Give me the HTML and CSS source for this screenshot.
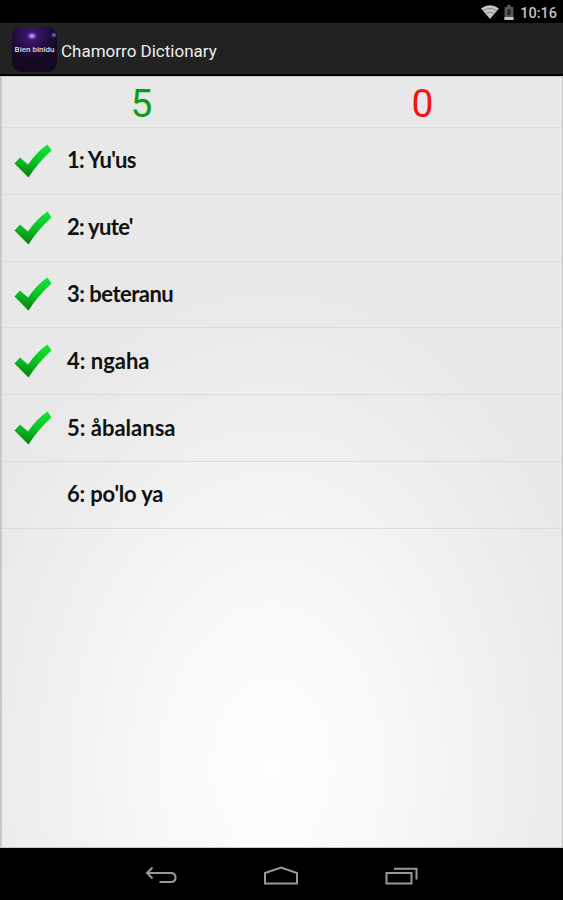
FILE: index.html
```
<!DOCTYPE html>
<html lang="en">
<head>
    <meta charset="UTF-8">
    <meta name="viewport" content="width=device-width, initial-scale=1.0">
    <title>Chamorro Dictionary</title>
    <link rel="stylesheet" href="styles.css">
</head>
<body>
    <!-- shared check mark -->
    <svg class="defs" width="0" height="0">
        <defs>
            <linearGradient id="green" x1="0.6" y1="0" x2="0.4" y2="1">
                <stop offset="0" stop-color="#10e432"/>
                <stop offset="0.5" stop-color="#0bc326"/>
                <stop offset="1" stop-color="#078010"/>
            </linearGradient>
            <symbol id="check" viewBox="0 0 38 34">
                <path d="M0.500 19.500L6 13.500L14 20.500C20 12 26 5.500 33.500 0.500L37.500 6.500C29 14 21 23 14.500 33.500Z" fill="url(#green)"/>
            </symbol>
        </defs>
    </svg>

    <div class="status-bar">
        <svg class="wifi" width="18" height="14" viewBox="0 0 18 14">
            <path d="M0 3.500Q9 -3 18 3.500L9 14Z" fill="#c4c4c4"/>
            <path d="M2 6Q9 1 16 6M4.500 9Q9 5.500 13.500 9" fill="none" stroke="#777" stroke-width="0.8"/>
        </svg>
        <svg class="battery" width="10" height="15" viewBox="0 0 10 15">
            <path d="M3 0H7V2H9.500V15H0.500V2H3Z" fill="#555"/>
            <path d="M3.500 4.500H6.500V10H3.500Z" fill="#222"/>
            <path d="M0.500 12H9.500V15H0.500Z" fill="#c8c8c8"/>
        </svg>
        <span class="clock">10:16</span>
    </div>

    <div class="action-bar">
        <div class="app-icon"><span>Bien binidu</span></div>
        <h1>Chamorro Dictionary</h1>
    </div>

    <div class="content">
        <div class="score">
            <span class="right">5</span>
            <span class="wrong">0</span>
        </div>
        <ul class="words">
            <li><svg class="check"><use href="#check"/></svg><span class="tight">1: Yu'us</span></li>
            <li><svg class="check"><use href="#check"/></svg><span class="tight">2: yute'</span></li>
            <li><svg class="check"><use href="#check"/></svg><span class="snug">3: beteranu</span></li>
            <li><svg class="check"><use href="#check"/></svg><span>4: ngaha</span></li>
            <li><svg class="check"><use href="#check"/></svg><span>5: åbalansa</span></li>
            <li><svg class="check"></svg><span class="close">6: po'lo ya</span></li>
        </ul>
    </div>

    <div class="nav-bar">
        <svg width="32" height="20" viewBox="0 0 32 20">
            <path d="M7.500 1.500L2 7L7.500 12.500M2 7H26Q30.500 7 30.500 11.500Q30.500 16 26 16H14.500"/>
        </svg>
        <svg width="36" height="20" viewBox="0 0 36 20">
            <path d="M2 17.500V7L18 1.500L34 7V17.500Z"/>
        </svg>
        <svg width="33" height="20" viewBox="0 0 33 20">
            <path d="M1.500 7H26.500V17.500H1.500ZM9 2.800H31.500V13.500"/>
        </svg>
    </div>
</body>
</html>
```
FILE: styles.css
```
* {
    box-sizing: border-box;
}
body {
    display: flex;
    flex-direction: column;
    height: 900px;
    margin: 0;
    background-color: #000;
    font-family: Roboto, sans-serif;
    overflow: hidden;
}
.defs {
    position: absolute;
}
.status-bar {
    display: flex;
    justify-content: flex-end;
    height: 23px;
    padding: 5px 6px 0 0;
}
.battery {
    margin: 0 6px 0 5px;
}
.clock {
    color: #c0c0c0;
    font-size: 14.5px;
    font-weight: 500;
    line-height: 17px;
}
.action-bar {
    display: flex;
    align-items: center;
    height: 53px;
    padding: 2px 0 0 12px;
    background-color: #222;
    border-bottom: 2px solid #000;
}
.app-icon {
    display: flex;
    justify-content: center;
    width: 45px;
    height: 45px;
    padding-top: 16px;
    border-radius: 9px;
    background:
        radial-gradient(ellipse 5px 4px at 20px 9px, #d9c4ff, #8247d8 55%, transparent),
        radial-gradient(circle 3px at 42px 8px, #8c7ae0, transparent),
        radial-gradient(circle at 20px 9px, #451c78 0, #220c43 16px, transparent 25px),
        #130a20;
}
.app-icon span {
    color: #ddd;
    font-size: 8px;
    font-weight: 500;
    line-height: 14px;
    white-space: nowrap;
}
h1 {
    margin: 2px 0 0 4px;
    color: #eee;
    font-size: 17px;
    font-weight: 400;
}
.content {
    flex: 1;
    border: 1px solid #c8c8c8;
    border-width: 1px 1px 1px 2px;
    background: radial-gradient(ellipse 330px 480px at 270px 690px, #fdfdfd 0, #f8f8f8 35%, #eee 75%, #e8e8e8 100%);
}
.score {
    display: flex;
    height: 51px;
    border-bottom: 1px solid #dbdbdb;
    font-size: 39px;
    line-height: 54px;
    text-align: center;
}
.score span {
    flex: 1;
}
.score .right {
    padding-right: 2px;
    color: #0a9e12;
}
.wrong {
    color: #f51414;
}
.words {
    margin: 0;
    padding: 0;
    list-style: none;
}
.words li {
    display: flex;
    align-items: center;
    height: 66.8px;
    padding-left: 12px;
    border-bottom: 1px solid #dbdbdb;
    color: #111;
    font-family: Lato, sans-serif;
    font-size: 22px;
    font-weight: 700;
    line-height: 30px;
}
.words span {
    padding-bottom: 1px;
}
.words .tight {
    letter-spacing: -0.7px;
}
.words .snug {
    letter-spacing: -0.5px;
}
.words .close {
    letter-spacing: -0.2px;
}
.check {
    width: 38px;
    height: 34px;
    margin-right: 15px;
}
.nav-bar {
    display: flex;
    justify-content: center;
    align-items: center;
    gap: 86px;
    height: 52px;
    padding: 3px 0 0 0;
}
.nav-bar svg {
    fill: none;
    stroke: #999;
    stroke-width: 2;
}
```
